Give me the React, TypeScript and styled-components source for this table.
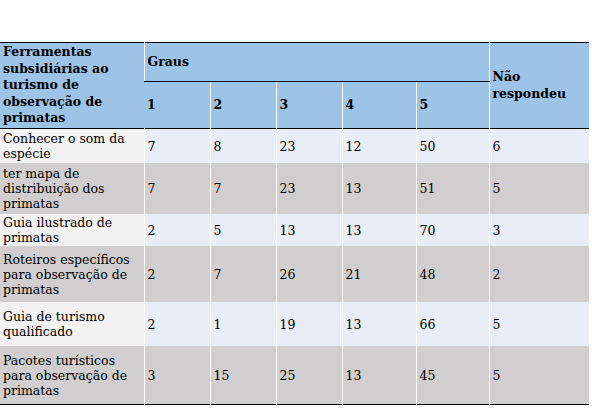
import React from 'react';
import styled, {createGlobalStyle} from 'styled-components';

const GlobalStyle = createGlobalStyle`
  html, body {
    margin: 0;
    padding: 0;
    background: #ffffff;
  }
`;

const Page = styled.div`
  padding-top: 42px;
  width: 592px;
  height: 408px;
  box-sizing: border-box;
`;

const Table = styled.table`
  width: 589px;
  border-collapse: collapse;
  table-layout: fixed;
  font-family: "DejaVu Serif", "Liberation Serif", serif;
  font-size: 12.5px;
  line-height: 15px;
  color: #000;
  border-top: 1.5px solid #000;
  border-bottom: 1.5px solid #000;
`;

const Head = styled.thead`
  background: #9dc3e6;
  border-bottom: 1.5px solid #000;
`;

const Th = styled.th<{$line?: boolean}>`
  text-align: left;
  font-weight: bold;
  vertical-align: middle;
  padding: 1px 2px 1px 3px;
  line-height: 16.5px;
  border-left: 1px solid #fff;
  border-bottom: ${({$line}) => ($line ? '1px solid #000' : 'none')};
  &:first-child {
    border-left: none;
    padding-right: 0;
  }
`;

const Row = styled.tr<{$shade: boolean; $pad: number}>`
  background: ${({$shade}) => ($shade ? '#d0cece' : '#e9edf6')};
  td {
    padding-top: ${({$pad}) => $pad}px;
    padding-bottom: ${({$pad}) => $pad}px;
  }
  td:first-child {
    background: ${({$shade}) => ($shade ? '#d0cece' : '#f2f2f2')};
  }
`;

const Td = styled.td`
  padding-left: 3px;
  padding-right: 2px;
  vertical-align: middle;
  border-left: 1px solid #fff;
  &:first-child {
    border-left: none;
    padding-right: 0;
  }
`;

const rows = [
  {label: 'Conhecer o som da espécie', values: [7, 8, 23, 12, 50, 6], pad: 2},
  {label: 'ter mapa de distribuição dos primatas', values: [7, 7, 23, 13, 51, 5], pad: 3},
  {label: 'Guia ilustrado de primatas', values: [2, 5, 13, 13, 70, 3], pad: 1},
  {label: 'Roteiros específicos para observação de primatas', values: [2, 7, 26, 21, 48, 2], pad: 5.5},
  {label: 'Guia de turismo qualificado', values: [2, 1, 19, 13, 66, 5], pad: 7},
  {label: 'Pacotes turísticos para observação de primatas', values: [3, 15, 25, 13, 45, 5], pad: 6.5},
];

const widths = [144, 66, 66, 66, 74, 73, 100];

export default function App() {
  return (
    <Page>
      <GlobalStyle/>
      <Table>
        <colgroup>
          {widths.map((w, i) => <col key={i} style={{width: w}}/>)}
        </colgroup>
        <Head>
          <tr>
            <Th rowSpan={2}>Ferramentas subsidiárias ao turismo de observação de primatas</Th>
            <Th colSpan={5} $line style={{height: 36}}>Graus</Th>
            <Th rowSpan={2}>Não respondeu</Th>
          </tr>
          <tr>
            {[1, 2, 3, 4, 5].map((n) => <Th key={n} style={{height: 44}}>{n}</Th>)}
          </tr>
        </Head>
        <tbody>
          {rows.map((r, i) => (
            <Row key={r.label} $shade={i % 2 === 1} $pad={r.pad}>
              <Td>{r.label}</Td>
              {r.values.map((v, j) => <Td key={j}>{v}</Td>)}
            </Row>
          ))}
        </tbody>
      </Table>
    </Page>
  );
}
